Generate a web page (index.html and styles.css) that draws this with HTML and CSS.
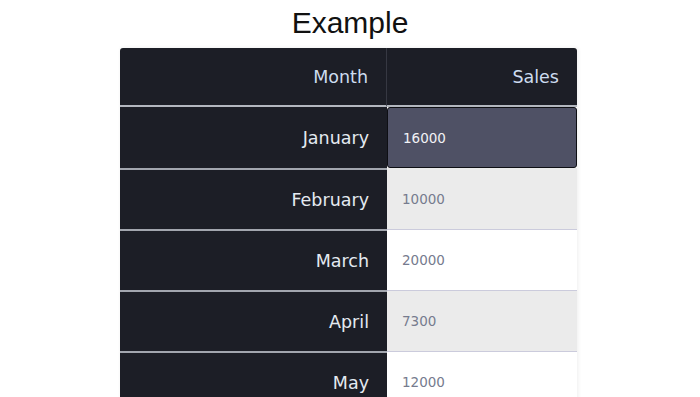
FILE: index.html
```html
<!DOCTYPE html>
<html lang="en">
<head>
<meta charset="UTF-8">
<meta name="viewport" content="width=device-width,initial-scale=1">
<title>Sales table</title>
<link rel="stylesheet" href="styles.css">
</head>
<body>

<h1 class="title">Example</h1>

<table class="sheet">
	<thead>
		<tr>
			<th class="month">Month</th>
			<th class="sales">Sales</th>
		</tr>
	</thead>
	<tbody>
		<tr>
			<td class="month">January</td>
			<td class="value editing"><input class="cell-input" type="text" value="16000" autofocus></td>
		</tr>
		<tr class="alt">
			<td class="month">February</td>
			<td class="value">10000</td>
		</tr>
		<tr>
			<td class="month">March</td>
			<td class="value">20000</td>
		</tr>
		<tr class="alt">
			<td class="month">April</td>
			<td class="value">7300</td>
		</tr>
		<tr>
			<td class="month">May</td>
			<td class="value">12000</td>
		</tr>
	</tbody>
</table>

</body>
</html>
```

FILE: styles.css
```css
body {
	margin: 0;
	background: #fff;
	font-family: "DejaVu Sans", sans-serif;
}
.title {
	margin: 6px 0 8px;
	font-family: "Liberation Sans", Arial, sans-serif;
	font-size: 30px;
	line-height: 34px;
	font-weight: normal;
	text-align: center;
	color: #111;
}

.sheet {
	margin: 0 0 0 calc(50% - 230px);
	width: 457px;
	border-collapse: separate;
	border-spacing: 0;
	box-shadow: 1px 0 4px rgba(0, 0, 0, .07);
}
.sheet th {
	height: 57px;
	padding: 0 18px;
	background: #1c1e26;
	color: #cddcef;
	font-size: 17.5px;
	font-weight: normal;
	text-align: right;
	border-bottom: 2px solid #b3b7bf;
}
.sheet th.month {
	width: 230px;
	border-top-left-radius: 3px;
	border-right: 1px solid #363842;
}
.sheet th.sales {
	border-top-right-radius: 3px;
}

.sheet td {
	height: 59px;
	padding: 0;
	box-sizing: border-box;
}
.sheet td.month {
	padding-right: 18px;
	background: #1c1e26;
	color: #e4eaf1;
	font-size: 17.5px;
	text-align: right;
	border-top: 2px solid #a2a6ae;
	height: 61px;
}
.sheet tbody tr:first-child td.month {
	border-top: 0;
	height: 61px;
}
.sheet td.value {
	padding-left: 15px;
	background: #fff;
	color: #767b8e;
	font-size: 13.5px;
	border-top: 1px solid #cbcbdc;
}
.sheet tr.alt td.value {
	background: #ebebeb;
}
.sheet tbody tr:nth-child(2) td.value {
	border-top: 0;
}

.sheet td.editing {
	padding: 0;
	border-top: 0;
}
.cell-input {
	display: block;
	box-sizing: border-box;
	width: 100%;
	height: 61px;
	margin: 0;
	padding: 0 0 0 15px;
	border: 1px solid #0e0f14;
	border-radius: 3px;
	background: #4f5165;
	color: #f2f2f6;
	font-family: inherit;
	font-size: 13.5px;
	outline: none;
	caret-color: #f2f2f6;
}
```
